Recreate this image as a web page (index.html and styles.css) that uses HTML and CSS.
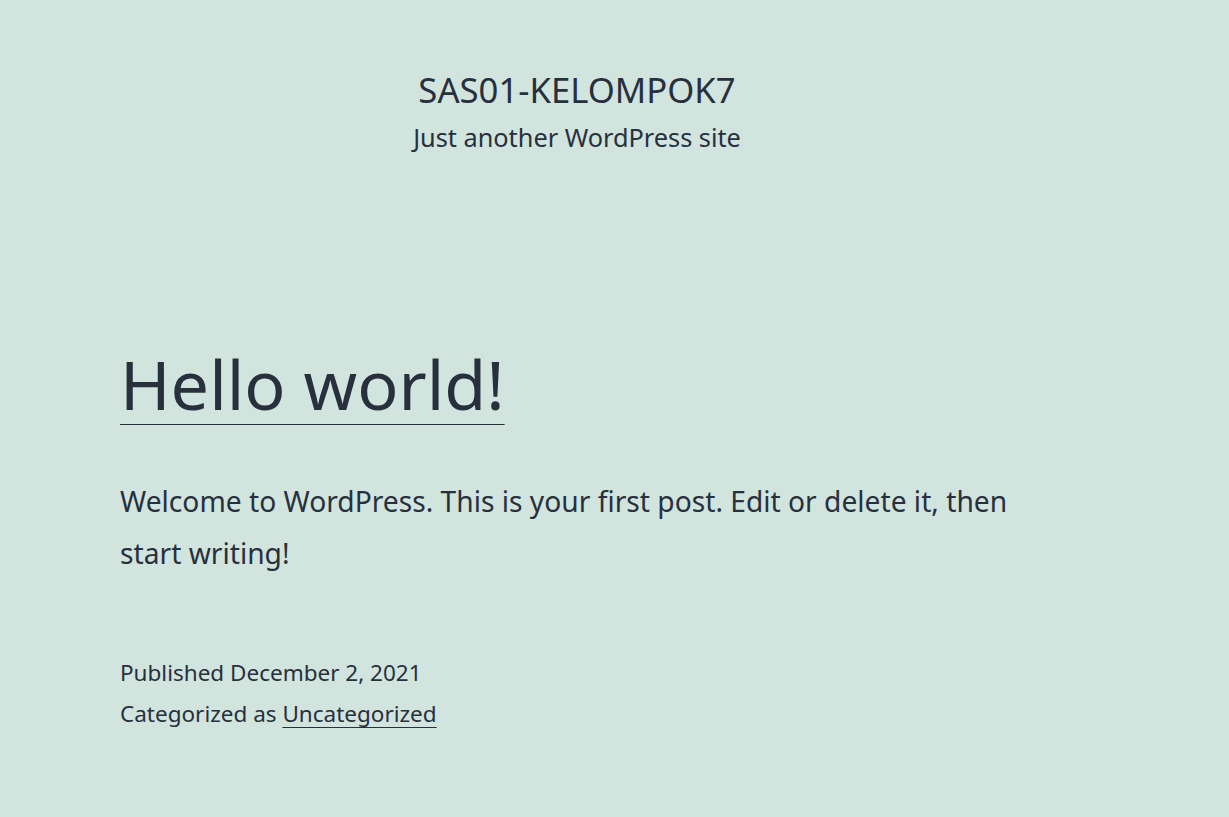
FILE: index.html
```html
<!DOCTYPE html>
<html lang="en">
<head>
<meta charset="utf-8">
<title>SAS01-KELOMPOK7 – Just another WordPress site</title>
<link rel="stylesheet" href="styles.css">
</head>
<body>
<div class="site">
  <header class="site-header">
    <div class="branding">
      <p class="site-title">SAS01-KELOMPOK7</p>
      <p class="site-description">Just another WordPress site</p>
    </div>
  </header>
  <main class="site-main">
    <article class="post">
      <h2 class="entry-title"><a href="#">Hello world!</a></h2>
      <div class="entry-content">
        <p>Welcome to WordPress. This is your first post. Edit or delete it, then start writing!</p>
      </div>
      <footer class="entry-footer">
        <span class="posted-on">Published <time>December 2, 2021</time></span>
        <span class="cat-links">Categorized as <a href="#">Uncategorized</a></span>
      </footer>
    </article>
  </main>
</div>
</body>
</html>
```
FILE: styles.css
```css
html, body {
  margin: 0;
  padding: 0;
}
body {
  background: #d1e4dd;
  color: #28303d;
  font-family: "Noto Sans", "Open Sans", sans-serif;
}
.site {
  padding: 0 120px;
}
.site-header {
  width: 914px;
  padding-top: 66px;
}
.branding {
  display: flex;
  flex-direction: column;
  align-items: center;
}
.site-title {
  margin: 0;
  font-size: 34.7px;
  line-height: 48px;
}
.site-description {
  margin: 3px 0 0;
  font-size: 25.3px;
  line-height: 40px;
}
.site-main {
  padding-top: 177px;
}
.entry-title {
  margin: 0;
  font-weight: 400;
  font-size: 68.3px;
  line-height: 100px;
}
.entry-title a {
  color: #28303d;
  text-decoration: underline;
  text-decoration-thickness: 1px;
  text-underline-offset: 14px;
}
.entry-content {
  max-width: 920px;
}
.entry-content p {
  margin: 41px 0 0;
  font-size: 28.2px;
  line-height: 52px;
}
.entry-footer {
  display: flex;
  flex-direction: column;
  margin-top: 73px;
  font-size: 22.5px;
  line-height: 41px;
}
.entry-footer a {
  color: #28303d;
  text-decoration: underline;
  text-decoration-thickness: 1px;
  text-underline-offset: 5px;
}
```
